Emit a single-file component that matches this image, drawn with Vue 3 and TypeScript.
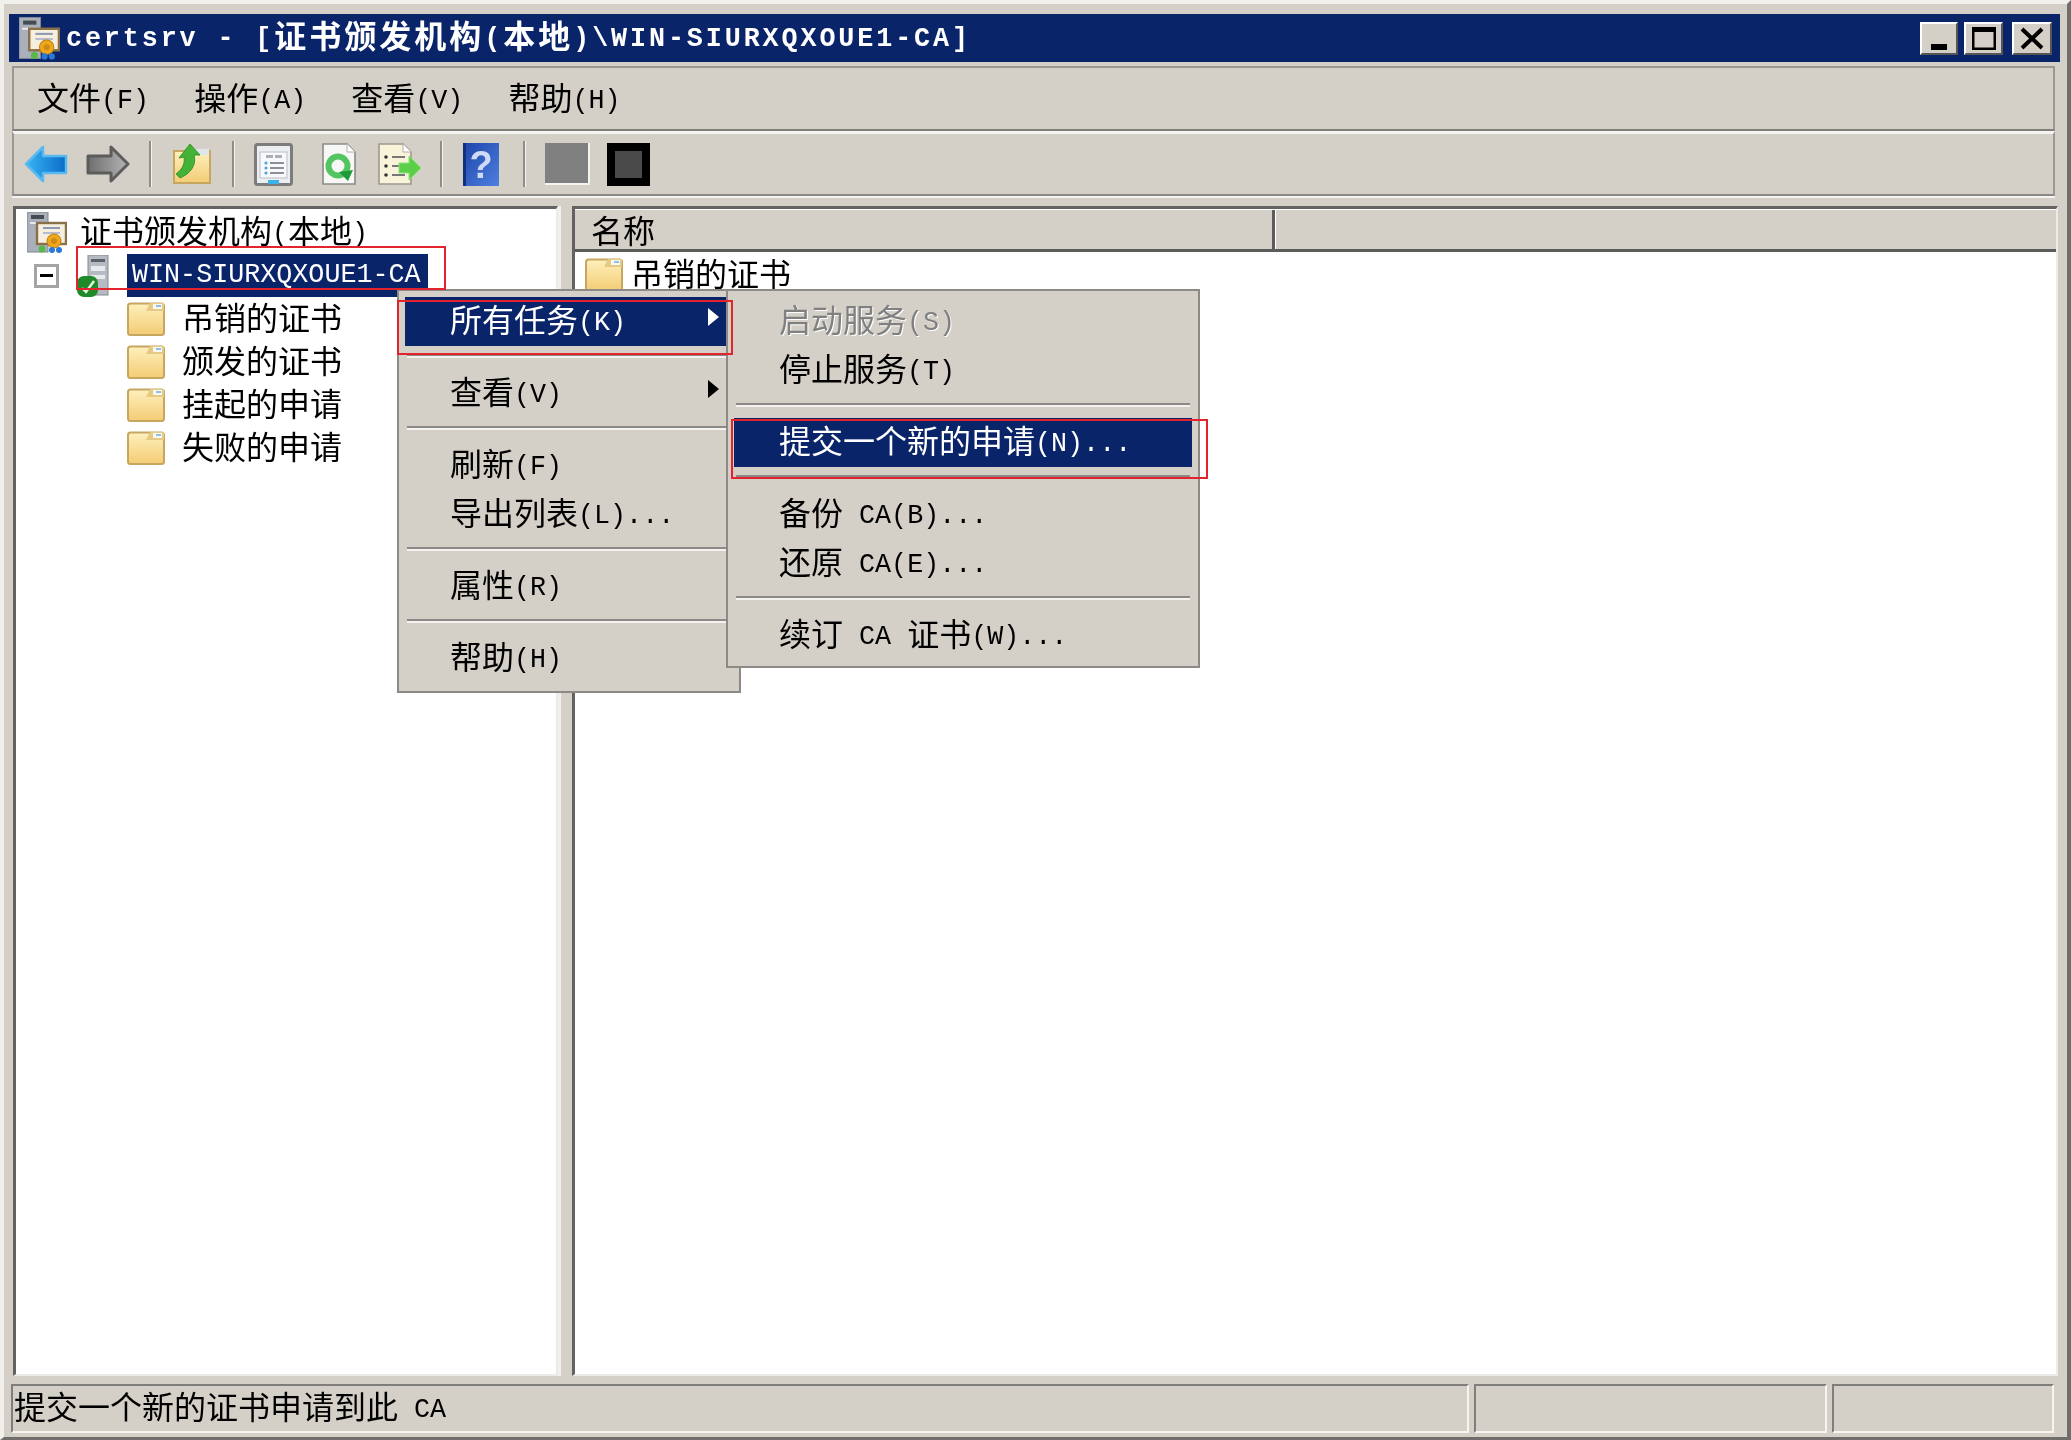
<script setup lang="ts">
import { h, type FunctionalComponent } from 'vue';

type Row = { label?: string; sep?: boolean; active?: boolean; off?: boolean; arrow?: boolean };

// half-width runs use a smaller mono face, like the bitmap font of the original
const Label: FunctionalComponent<{ text: string }> = ({ text }) =>
  h(
    'span',
    { class: 'txt' },
    text
      .split(/([\u4e00-\u9fff]+)/)
      .filter(Boolean)
      .map((run) => h('span', { class: /[\u4e00-\u9fff]/.test(run) ? 'zh' : 'lat' }, run)),
  );

const menus = ['文件(F)', '操作(A)', '查看(V)', '帮助(H)'];
const folders = ['吊销的证书', '颁发的证书', '挂起的申请', '失败的申请'];

const mainMenu: Row[] = [
  { label: '所有任务(K)', active: true, arrow: true },
  { sep: true },
  { label: '查看(V)', arrow: true },
  { sep: true },
  { label: '刷新(F)' },
  { label: '导出列表(L)...' },
  { sep: true },
  { label: '属性(R)' },
  { sep: true },
  { label: '帮助(H)' },
];

const subMenu: Row[] = [
  { label: '启动服务(S)', off: true },
  { label: '停止服务(T)' },
  { sep: true },
  { label: '提交一个新的申请(N)...', active: true },
  { sep: true },
  { label: '备份 CA(B)...' },
  { label: '还原 CA(E)...' },
  { sep: true },
  { label: '续订 CA 证书(W)...' },
];
</script>

<template>
  <div class="window">
    <svg class="defs" width="0" height="0">
      <defs>
        <linearGradient id="gFolder" x1="0" y1="0" x2="0" y2="1">
          <stop offset="0" stop-color="#fdf0bd" />
          <stop offset="1" stop-color="#f4cc74" />
        </linearGradient>
        <linearGradient id="gBlue" x1="0" y1="0" x2="1" y2="0">
          <stop offset="0" stop-color="#38b4f4" />
          <stop offset="1" stop-color="#0a6cc8" />
        </linearGradient>
        <linearGradient id="gGray" x1="0" y1="0" x2="1" y2="0">
          <stop offset="0" stop-color="#6e6e6e" />
          <stop offset="1" stop-color="#b4b4b4" />
        </linearGradient>
        <linearGradient id="gHelp" x1="0" y1="0" x2="1" y2="1">
          <stop offset="0" stop-color="#1c45a8" />
          <stop offset="1" stop-color="#4f7fe0" />
        </linearGradient>
        <symbol id="folder" viewBox="0 0 38 34">
          <rect x="1" y="1.5" width="36" height="31.5" rx="2.5" fill="url(#gFolder)" stroke="#c6a660" stroke-width="2" />
          <path d="M19 9 L23 1 H37 V9 Z" fill="#e6ca84" />
          <rect x="26" y="2" width="9" height="5" fill="#f8f8f4" />
          <rect x="29" y="3" width="5" height="2" fill="#8fc0dc" />
        </symbol>
        <symbol id="cert" viewBox="0 0 40 41">
          <rect x="0" y="0" width="21" height="40" fill="#a9b0ba" stroke="#7f8690" />
          <rect x="4" y="3" width="13" height="4" fill="#454c56" />
          <rect x="3" y="10" width="15" height="2" fill="#e6e9ee" />
          <rect x="10" y="11" width="29" height="21" fill="#f6efdd" stroke="#8a7048" stroke-width="2.4" />
          <rect x="16" y="15" width="17" height="2" fill="#8d98b4" />
          <rect x="16" y="20" width="17" height="2" fill="#b5bccd" />
          <circle cx="27" cy="29" r="7" fill="#eda81e" stroke="#c07c10" />
          <circle cx="27" cy="29" r="3" fill="#d08a14" />
          <circle cx="15" cy="37" r="3.4" fill="#55b848" />
          <circle cx="25" cy="38" r="3" fill="#2a78d8" />
          <circle cx="32" cy="38" r="3" fill="#2a78d8" />
        </symbol>
      </defs>
    </svg>

    <header class="titlebar">
      <svg class="title-icon" width="41" height="45"><use href="#cert" /></svg>
      <div class="title-text"><Label text="certsrv - [证书颁发机构(本地)\WIN-SIURXQXOUE1-CA]" /></div>
      <div class="caption-btns">
        <button class="cap cap-min">
          <svg width="34" height="29" viewBox="0 0 34 29"><rect x="9" y="20" width="16" height="6" /></svg>
        </button>
        <button class="cap cap-max">
          <svg width="35" height="29" viewBox="0 0 35 29">
            <path d="M6 3 H30 V26 H6 Z M8.5 8 V23.5 H27.5 V8 Z" fill-rule="evenodd" />
          </svg>
        </button>
        <button class="cap cap-close">
          <svg width="36" height="29" viewBox="0 0 36 29">
            <path d="M8 5 L28 24 M28 5 L8 24" stroke="#000" stroke-width="4" fill="none" />
          </svg>
        </button>
      </div>
    </header>

    <nav class="menubar">
      <span v-for="m in menus" :key="m" class="menu-name"><Label :text="m" /></span>
    </nav>

    <div class="toolbar">
      <svg class="t-back" width="44" height="38" viewBox="0 0 44 38">
        <path d="M2 19 L19 2 V11 H42 V28 H19 V36 Z" fill="url(#gBlue)" stroke="#58b8f0" stroke-width="2.5" stroke-linejoin="round" />
      </svg>
      <svg class="t-fwd" width="44" height="38" viewBox="0 0 44 38">
        <path d="M42 19 L25 2 V11 H2 V28 H25 V36 Z" fill="url(#gGray)" stroke="#5c5c5c" stroke-width="3" stroke-linejoin="round" />
      </svg>
      <span class="t-sep s1"></span>
      <svg class="t-up" width="38" height="40" viewBox="0 0 38 40">
        <rect x="1" y="7" width="36" height="32" fill="url(#gFolder)" stroke="#c6a660" stroke-width="2" />
        <rect x="22" y="5" width="14" height="6" fill="#dfe6ea" />
        <path d="M3 30 C10 25 12 19 11 13 L6 14 L17 0 L27 11 L21 11 C24 21 17 30 7 34 Z" fill="#43b236" stroke="#35962a" />
      </svg>
      <span class="t-sep s2"></span>
      <svg class="t-props" width="39" height="43" viewBox="0 0 39 43">
        <rect x="1.5" y="1.5" width="36" height="40" rx="2" fill="#eceff2" stroke="#7c7c7c" stroke-width="3" />
        <rect x="6" y="9" width="27" height="26" fill="#f8f9fa" stroke="#b8bcc4" />
        <rect x="12" y="12" width="7" height="3" fill="#a9adb4" />
        <rect x="21" y="12" width="7" height="3" fill="#a9adb4" />
        <circle cx="12" cy="20" r="1.6" fill="#4aa6e0" />
        <rect x="16" y="19" width="14" height="2" fill="#8a8f98" />
        <circle cx="12" cy="25" r="1.6" fill="#4aa6e0" />
        <rect x="16" y="24" width="14" height="2" fill="#8a8f98" />
        <circle cx="12" cy="30" r="1.6" fill="#4aa6e0" />
        <rect x="16" y="29" width="14" height="2" fill="#8a8f98" />
        <rect x="14" y="37" width="11" height="4" fill="#3ab4e8" />
      </svg>
      <svg class="t-refresh" width="34" height="42" viewBox="0 0 34 42">
        <path d="M1 1 H25 L33 9 V41 H1 Z" fill="#f7f7f5" stroke="#8a8a86" stroke-width="1.6" />
        <path d="M25 1 V9 H33" fill="#fff" stroke="#b0b0ac" />
        <circle cx="16" cy="23" r="9.5" fill="none" stroke="#52c460" stroke-width="6" />
        <path d="M17 29 L31 27 L26 38 Z" fill="#1f9a3a" />
      </svg>
      <svg class="t-export" width="44" height="42" viewBox="0 0 44 42">
        <path d="M1 1 H25 L33 9 V41 H1 Z" fill="#f9f3d9" stroke="#9c9a90" stroke-width="1.6" />
        <path d="M25 1 V9 H33" fill="#fff" stroke="#b0b0ac" />
        <g fill="#333">
          <circle cx="8" cy="14" r="1.8" />
          <circle cx="8" cy="23" r="1.8" />
          <circle cx="8" cy="32" r="1.8" />
        </g>
        <g fill="#777">
          <rect x="14" y="13" width="13" height="2" />
          <rect x="14" y="22" width="13" height="2" />
          <rect x="14" y="31" width="13" height="2" />
        </g>
        <path d="M21 20 H31 V13 L43 25 L31 37 V30 H21 Z" fill="#5ccf48" stroke="#8ae27a" />
      </svg>
      <span class="t-sep s3"></span>
      <svg class="t-help" width="36" height="43" viewBox="0 0 36 43">
        <rect width="36" height="43" fill="url(#gHelp)" />
        <rect x="0" y="0" width="3" height="43" fill="#132f80" />
        <text x="18" y="35" text-anchor="middle" font-family="Liberation Sans" font-weight="700" font-size="38" fill="#cfdaf6">?</text>
      </svg>
      <span class="t-sep s4"></span>
      <span class="t-gray"></span>
      <span class="t-black"><i></i></span>
    </div>

    <main class="panes">
      <section class="tree">
        <div class="tree-row root">
          <svg width="40" height="41"><use href="#cert" /></svg>
          <span class="tree-text"><Label text="证书颁发机构(本地)" /></span>
        </div>
        <div class="tree-row server">
          <span class="expander"><i></i></span>
          <svg class="srv" width="33" height="42" viewBox="0 0 33 42">
            <rect x="12" y="0" width="20" height="40" fill="#b6bac2" stroke="#858a92" />
            <rect x="15" y="4" width="14" height="3" fill="#5b626c" />
            <rect x="15" y="11" width="14" height="5" fill="#e8ebee" />
            <rect x="15" y="20" width="14" height="4" fill="#e8ebee" />
            <rect x="1" y="21" width="21" height="21" rx="7" fill="#1f8a2a" />
            <path d="M6 33 L10 37 L18 26" fill="none" stroke="#e8f8e0" stroke-width="2.4" />
          </svg>
          <span class="tree-selected"><Label text="WIN-SIURXQXOUE1-CA" /></span>
        </div>
        <div v-for="f in folders" :key="f" class="tree-row leaf">
          <svg width="38" height="34"><use href="#folder" /></svg>
          <span class="tree-text"><Label :text="f" /></span>
        </div>
      </section>

      <div class="splitter"></div>

      <section class="list">
        <div class="list-head">
          <div class="col col-name"><Label text="名称" /></div>
          <div class="col col-rest"></div>
        </div>
        <div class="list-row">
          <svg width="38" height="34"><use href="#folder" /></svg>
          <span class="tree-text"><Label :text="folders[0]" /></span>
        </div>
      </section>
    </main>

    <footer class="statusbar">
      <div class="panel p-main"><Label text="提交一个新的证书申请到此 CA" /></div>
      <div class="panel p-mid"></div>
      <div class="panel p-end"></div>
    </footer>

    <div class="ctx ctx-main">
      <template v-for="(r, i) in mainMenu" :key="i">
        <div v-if="r.sep" class="sep"></div>
        <div v-else class="item" :class="{ active: r.active, off: r.off }">
          <Label :text="r.label ?? ''" />
          <i v-if="r.arrow" class="arrow"></i>
        </div>
      </template>
    </div>

    <div class="ctx ctx-sub">
      <template v-for="(r, i) in subMenu" :key="i">
        <div v-if="r.sep" class="sep"></div>
        <div v-else class="item" :class="{ active: r.active, off: r.off }">
          <Label :text="r.label ?? ''" />
        </div>
      </template>
    </div>

    <div class="mark mark-server"></div>
    <div class="mark mark-all"></div>
    <div class="mark mark-new"></div>
  </div>
</template>

<style scoped>
.window {
  position: relative;
  box-sizing: border-box;
  width: 2071px;
  height: 1440px;
  display: flex;
  flex-direction: column;
  padding: 10px 7px 4px 5px;
  background: #d4d0c8;
  border-top: 4px solid #f1f0ec;
  border-left: 4px solid #f1f0ec;
  border-right: 4px solid #6f6e6a;
  border-bottom: 3px solid #6f6e6a;
  font-size: 32px;
  line-height: 1;
  color: #000;
  filter: blur(0.5px);
  overflow: hidden;
}
.defs {
  position: absolute;
}

.titlebar {
  height: 48px;
  flex: none;
  display: flex;
  align-items: center;
  background: #0a246a;
  color: #fff;
  font-weight: 700;
}
.title-icon {
  margin-left: 10px;
  flex: none;
}
.title-text {
  margin-left: 6px;
  white-space: pre;
}
.caption-btns {
  margin-left: auto;
  display: flex;
  padding-right: 8px;
}
.cap {
  height: 33px;
  padding: 0;
  display: flex;
  align-items: center;
  justify-content: center;
  background: #d4d0c8;
  border: 2px solid;
  border-color: #fff #555 #555 #fff;
  box-sizing: border-box;
}
.cap-min {
  width: 38px;
}
.cap-max {
  width: 39px;
  margin-left: 6px;
}
.cap-close {
  width: 40px;
  margin-left: 9px;
}

.menubar {
  margin: 4px 5px 0 3px;
  height: 65px;
  flex: none;
  box-sizing: border-box;
  display: flex;
  align-items: center;
  gap: 45px;
  padding: 2px 0 0 23px;
  border: 2px solid #9a9893;
  border-bottom-color: #7f7e7a;
}
.menu-name {
  white-space: pre;
}

.toolbar {
  margin: 0 5px 0 3px;
  height: 65px;
  flex: none;
  box-sizing: border-box;
  display: flex;
  align-items: center;
  padding-left: 10px;
  border: 2px solid #9a9893;
  border-top: 3px solid #f4f3ef;
  border-bottom-color: #8b8a86;
  box-shadow: 0 2px 0 #f4f3ef;
}
.toolbar > svg,
.toolbar > span {
  flex: none;
}
.t-fwd {
  margin-left: 18px;
}
.t-sep {
  width: 3px;
  height: 46px;
  background: #8e8d89;
  border-right: 1px solid #f4f3ef;
  box-sizing: border-box;
}
.s1 {
  margin-left: 19px;
}
.t-up {
  margin-left: 21px;
}
.s2 {
  margin-left: 21px;
}
.t-props {
  margin-left: 19px;
}
.t-refresh {
  margin-left: 29px;
}
.t-export {
  margin-left: 22px;
}
.s3 {
  margin-left: 18px;
}
.t-help {
  margin-left: 20px;
}
.s4 {
  margin-left: 24px;
}
.t-gray {
  margin-left: 19px;
  width: 45px;
  height: 42px;
  box-sizing: border-box;
  background: #808080;
  border-right: 2px solid #f4f3ef;
  border-bottom: 2px solid #f4f3ef;
}
.t-black {
  margin-left: 17px;
  width: 43px;
  height: 43px;
  background: #000;
  display: flex;
  align-items: center;
  justify-content: center;
}
.t-black i {
  width: 27px;
  height: 27px;
  background: #4a4a4a;
}

.panes {
  flex: 1;
  min-height: 0;
  display: flex;
  margin: 10px 2px 0 4px;
}
.tree {
  width: 545px;
  box-sizing: border-box;
  background: #fff;
  border-top: 3px solid #626262;
  border-left: 3px solid #626262;
  border-right: 2px solid #ecebe7;
  border-bottom: 2px solid #ecebe7;
  padding-top: 2px;
}
.tree-row {
  height: 43px;
  display: flex;
  align-items: center;
}
.tree-row svg {
  flex: none;
}
.tree-text {
  white-space: pre;
}
.root {
  padding-left: 11px;
  gap: 13px;
}
.server {
  padding-left: 18px;
}
.expander {
  width: 25px;
  height: 24px;
  box-sizing: border-box;
  background: #fff;
  border: 3px solid #a4a4a4;
  display: flex;
  align-items: center;
  justify-content: center;
}
.expander i {
  width: 13px;
  height: 3px;
  background: #000;
}
.srv {
  margin-left: 17px;
}
.tree-selected {
  margin-left: 18px;
  height: 43px;
  width: 301px;
  box-sizing: border-box;
  padding-left: 5px;
  display: flex;
  align-items: center;
  background: #0a246a;
  color: #fff;
  white-space: pre;
}
.leaf {
  padding-left: 111px;
  gap: 17px;
}

.splitter {
  width: 14px;
  box-sizing: border-box;
  border-left: 3px solid #f1f0ec;
}

.list {
  flex: 1;
  min-width: 0;
  background: #fff;
  box-sizing: border-box;
  border-top: 3px solid #626262;
  border-left: 3px solid #626262;
  border-right: 2px solid #ecebe7;
  border-bottom: 2px solid #ecebe7;
  display: flex;
  flex-direction: column;
}
.list-head {
  height: 43px;
  flex: none;
  display: flex;
  background: #d4d0c8;
  box-sizing: border-box;
  border-top: 1px solid #fff;
  border-bottom: 3px solid #5c5c5c;
}
.col {
  display: flex;
  align-items: center;
  box-sizing: border-box;
  white-space: pre;
}
.col-name {
  width: 700px;
  padding: 4px 0 0 16px;
  border-right: 3px solid #5c5c5c;
}
.col-rest {
  flex: 1;
  border-left: 1px solid #fff;
}
.list-row {
  height: 43px;
  margin-top: 1px;
  display: flex;
  align-items: center;
  padding-left: 10px;
  gap: 8px;
}
.list-row svg {
  flex: none;
}

.statusbar {
  margin: 8px 6px 0 2px;
  height: 49px;
  flex: none;
  display: flex;
  gap: 5px;
}
.panel {
  box-sizing: border-box;
  border: 2px solid;
  border-color: #7f7e7a #f6f5f1 #f6f5f1 #7f7e7a;
  display: flex;
  align-items: center;
  white-space: pre;
}
.p-main {
  flex: 1;
  padding-left: 1px;
}
.p-mid {
  width: 353px;
}
.p-end {
  width: 222px;
}

/* context menus float over the panes */
.ctx {
  position: absolute;
  box-sizing: border-box;
  background: #d4d0c8;
  border: 2px solid #8c8a86;
  padding: 6px 6px 8px;
}
.ctx-main {
  left: 393px;
  top: 285px;
  width: 344px;
  height: 404px;
  z-index: 2;
}
.ctx-sub {
  left: 722px;
  top: 285px;
  width: 474px;
  height: 379px;
  z-index: 3;
}
.item {
  position: relative;
  height: 49px;
  display: flex;
  align-items: center;
  padding-left: 45px;
  white-space: pre;
}
.item.active {
  background: #0a246a;
  color: #fff;
}
.item.off {
  color: #808080;
  text-shadow: 1px 1px 0 #fff;
}
.sep {
  height: 23px;
  position: relative;
}
.sep::before {
  content: '';
  position: absolute;
  left: 2px;
  right: 2px;
  top: 8px;
  height: 2px;
  background: #8a8985;
  border-bottom: 2px solid #f4f3ef;
}
.arrow {
  position: absolute;
  right: 14px;
  top: 11px;
  width: 0;
  height: 0;
  border-left: 11px solid currentColor;
  border-top: 9px solid transparent;
  border-bottom: 9px solid transparent;
}

/* annotation rectangles drawn on the screenshot */
.mark {
  position: absolute;
  box-sizing: border-box;
  border: 2px solid #e3242f;
  z-index: 4;
}
.mark-server {
  left: 72px;
  top: 242px;
  width: 370px;
  height: 44px;
}
.mark-all {
  left: 393px;
  top: 296px;
  width: 336px;
  height: 55px;
}
.mark-new {
  left: 727px;
  top: 415px;
  width: 477px;
  height: 60px;
}
</style>

<style>
html,
body {
  margin: 0;
  background: #d4d0c8;
}
.txt {
  display: inline-block;
  margin-top: -3px;
}
.zh {
  font-family: 'Noto Sans CJK SC', sans-serif;
}
.lat {
  font-family: 'Liberation Mono', monospace;
  font-size: 0.835em;
  position: relative;
  top: -2px;
}
.title-text .zh {
  letter-spacing: 3px;
}
.title-text .lat {
  letter-spacing: 2.9px;
}
</style>
